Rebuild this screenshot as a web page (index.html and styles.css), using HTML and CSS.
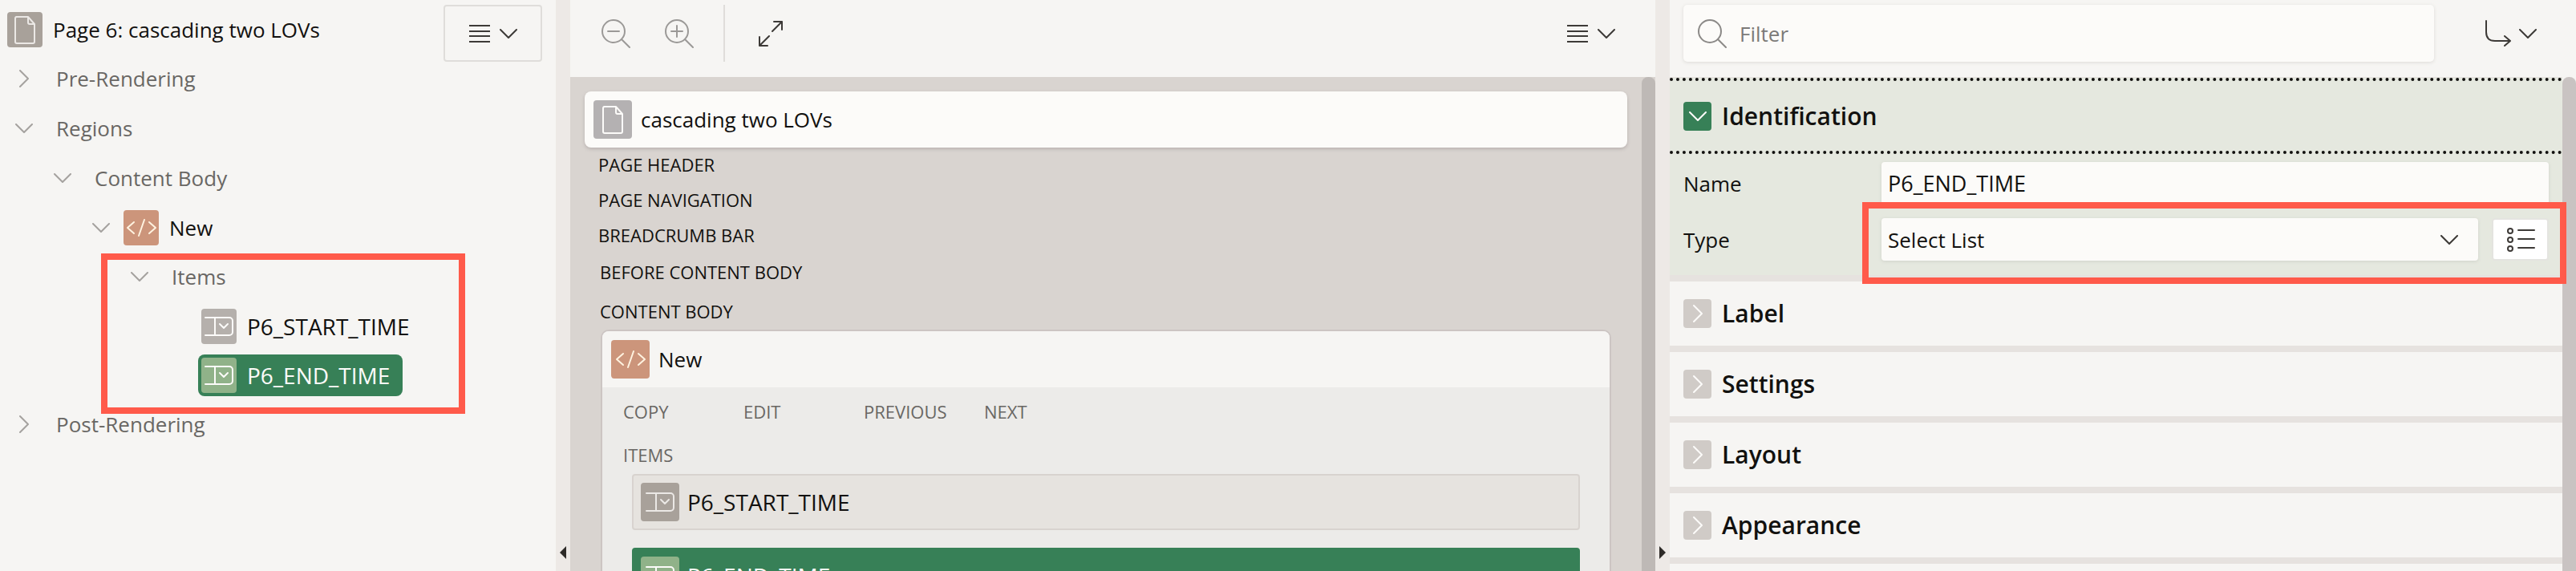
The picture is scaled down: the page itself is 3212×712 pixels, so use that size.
FILE: index.html
```html
<!DOCTYPE html>
<html lang="en">
<head>
<meta charset="utf-8">
<title>Page Designer</title>
<link rel="stylesheet" href="styles.css">
</head>
<body>
<svg class="sprite" aria-hidden="true">
  <symbol id="page" viewBox="0 0 44 44"><path d="M11 6h15l8 9v22a2 2 0 0 1-2 2H12a2 2 0 0 1-2-2V8a2 2 0 0 1 2-2zM26 6v7a2 2 0 0 0 2 2h6"/></symbol>
  <symbol id="code" viewBox="0 0 44 44"><path d="M13 15l-8 7 8 7M26 12l-7 20M32 15l8 7-8 7"/></symbol>
  <symbol id="select-item" viewBox="0 0 44 44"><path d="M5 11h30a4 4 0 0 1 4 4v14a4 4 0 0 1-4 4H5M17 11v22M23 19l5 5 5-5"/></symbol>
  <symbol id="down" viewBox="0 0 22 12"><path d="M1 1l10 10L21 1"/></symbol>
  <symbol id="right" viewBox="0 0 12 22"><path d="M1 1l10 10L1 21"/></symbol>
  <symbol id="lines" viewBox="0 0 26 24"><path d="M0 2h26M0 9h26M0 15h26M0 22h26"/></symbol>
  <symbol id="lens" viewBox="0 0 36 36"><circle cx="15" cy="15" r="14"/><path d="M25 25l10 10"/></symbol>
  <symbol id="zoom-out" viewBox="0 0 36 36"><circle cx="15" cy="15" r="14"/><path d="M25 25l10 10M8 15h14"/></symbol>
  <symbol id="zoom-in" viewBox="0 0 36 36"><circle cx="15" cy="15" r="14"/><path d="M25 25l10 10M8 15h14M15 8v14"/></symbol>
  <symbol id="expand" viewBox="0 0 30 32"><path d="M17 13L29 1M19 1h10v10M13 19L1 31M1 20v11h10"/></symbol>
  <symbol id="goto" viewBox="0 0 32 34"><path d="M1 1v14q0 11 11 11h19M24 20l7 6-7 6"/></symbol>
  <symbol id="list" viewBox="0 0 36 32"><circle cx="5" cy="5" r="3"/><circle cx="5" cy="16" r="3"/><circle cx="5" cy="27" r="3"/><path d="M15 4h20M15 15h20M15 26h20"/></symbol>
</svg>

<main class="designer">
  <nav class="tree-panel" aria-label="Page tree">
    <button class="menu-button menu-button--framed" type="button" aria-label="Tree menu">
      <svg class="i-lines"><use href="#lines"/></svg><svg class="i-down"><use href="#down"/></svg>
    </button>
    <div class="root row row--icon"><svg class="tile tile--taupe"><use href="#page"/></svg><span>Page 6: cascading two LOVs</span></div>
    <ul class="tree">
      <li>
        <div class="row"><button class="toggle" type="button" aria-label="Expand"><svg class="i-right"><use href="#right"/></svg></button><span class="label">Pre-Rendering</span></div>
      </li>
      <li>
        <div class="row"><button class="toggle" type="button" aria-label="Collapse"><svg class="i-down"><use href="#down"/></svg></button><span class="label">Regions</span></div>
        <ul>
          <li>
            <div class="row"><button class="toggle" type="button" aria-label="Collapse"><svg class="i-down"><use href="#down"/></svg></button><span class="label">Content Body</span></div>
            <ul>
              <li>
                <div class="row row--icon"><button class="toggle" type="button" aria-label="Collapse"><svg class="i-down"><use href="#down"/></svg></button><span class="node"><svg class="tile tile--code"><use href="#code"/></svg>New</span></div>
                <ul>
                  <li>
                    <div class="row"><button class="toggle" type="button" aria-label="Collapse"><svg class="i-down"><use href="#down"/></svg></button><span class="label">Items</span></div>
                    <ul>
                      <li class="row row--icon row--leaf"><span class="node item-name"><svg class="tile tile--grey"><use href="#select-item"/></svg>P6_START_TIME</span></li>
                      <li class="row row--icon row--leaf"><span class="node node--selected item-name"><svg class="tile tile--green"><use href="#select-item"/></svg>P6_END_TIME</span></li>
                    </ul>
                    <span class="highlight highlight--items"></span>
                  </li>
                </ul>
              </li>
            </ul>
          </li>
        </ul>
      </li>
      <li>
        <div class="row"><button class="toggle" type="button" aria-label="Expand"><svg class="i-right"><use href="#right"/></svg></button><span class="label">Post-Rendering</span></div>
      </li>
    </ul>
  </nav>

  <div class="splitter"><button class="collapse collapse--left" type="button" aria-label="Collapse tree"></button></div>

  <section class="layout-panel" aria-label="Layout">
    <div class="toolbar">
      <button class="tool tool--dim" type="button" aria-label="Zoom out"><svg class="i-lens"><use href="#zoom-out"/></svg></button>
      <button class="tool tool--dim" type="button" aria-label="Zoom in"><svg class="i-lens"><use href="#zoom-in"/></svg></button>
      <span class="divider"></span>
      <button class="tool tool--expand" type="button" aria-label="Expand"><svg class="i-expand"><use href="#expand"/></svg></button>
      <button class="menu-button menu-button--end" type="button" aria-label="Layout menu">
        <svg class="i-lines"><use href="#lines"/></svg><svg class="i-down"><use href="#down"/></svg>
      </button>
    </div>
    <div class="canvas">
      <div class="canvas-body">
        <div class="card"><svg class="tile tile--big tile--silver"><use href="#page"/></svg><span>cascading two LOVs</span></div>
        <div class="slots">
          <p class="slot">Page Header</p>
          <p class="slot">Page Navigation</p>
          <p class="slot">Breadcrumb Bar</p>
        </div>
        <div class="slots slots--body">
          <p class="slot slot--tall">Before Content Body</p>
          <p class="slot slot--tall">Content Body</p>
        </div>
        <div class="region">
          <div class="region-head"><svg class="tile tile--big tile--code"><use href="#code"/></svg><span>New</span></div>
          <div class="region-positions"><span>Copy</span><span>Edit</span><span>Previous</span><span>Next</span></div>
          <p class="region-items">Items</p>
          <div class="item item-name"><svg class="tile tile--big tile--taupe"><use href="#select-item"/></svg><span>P6_START_TIME</span></div>
          <div class="item item--selected item-name"><svg class="tile tile--big tile--green"><use href="#select-item"/></svg><span>P6_END_TIME</span></div>
        </div>
      </div>
      <div class="scrollbar"></div>
    </div>
  </section>

  <div class="splitter"><button class="collapse collapse--right" type="button" aria-label="Collapse properties"></button></div>

  <section class="props-panel" aria-label="Property editor">
    <div class="toolbar toolbar--props">
      <label class="filter"><svg class="i-lens"><use href="#lens"/></svg><input type="search" placeholder="Filter" aria-label="Filter"></label>
      <button class="menu-button menu-button--goto" type="button" aria-label="Go to group">
        <svg class="i-goto"><use href="#goto"/></svg><svg class="i-down"><use href="#down"/></svg>
      </button>
    </div>
    <div class="props">
      <div class="groups">
        <section class="group group--open">
          <h2><button class="group-head group-head--open" type="button" aria-expanded="true"><span class="box box--open"><svg class="i-down"><use href="#down"/></svg></span>Identification</button></h2>
          <div class="fields">
            <div class="field"><label for="name">Name</label><input id="name" class="control control--name" type="text" value="P6_END_TIME"></div>
            <div class="field">
              <label for="type">Type</label>
              <span class="select-wrap"><select id="type" class="control"><option>Select List</option></select><svg class="i-down select-arrow"><use href="#down"/></svg></span>
              <button class="list-button" type="button" aria-label="Choose type"><svg class="i-list"><use href="#list"/></svg></button>
              <span class="highlight highlight--type"></span>
            </div>
          </div>
        </section>
        <section class="group"><h2><button class="group-head" type="button"><span class="box"><svg class="i-right"><use href="#right"/></svg></span>Label</button></h2></section>
        <section class="group"><h2><button class="group-head" type="button"><span class="box"><svg class="i-right"><use href="#right"/></svg></span>Settings</button></h2></section>
        <section class="group"><h2><button class="group-head" type="button"><span class="box"><svg class="i-right"><use href="#right"/></svg></span>Layout</button></h2></section>
        <section class="group"><h2><button class="group-head" type="button"><span class="box"><svg class="i-right"><use href="#right"/></svg></span>Appearance</button></h2></section>
      </div>
      <div class="scrollbar scrollbar--props"></div>
    </div>
  </section>
</main>
</body>
</html>
```
FILE: styles.css
```css
* { box-sizing: border-box; }

body {
  margin: 0;
  overflow: hidden;
  background: #f6f5f3;
  color: #12110f;
  font: 26px/36px "Open Sans", "Noto Sans", sans-serif;
}

button, input, select {
  margin: 0;
  padding: 0;
  border: 0;
  background: none;
  color: inherit;
  font: inherit;
}

ul { margin: 0; padding: 0; list-style: none; }
p, h2 { margin: 0; }

svg {
  flex: none;
  display: block;
  fill: none;
  stroke: currentColor;
  stroke-width: 2;
  stroke-linecap: round;
  stroke-linejoin: round;
}

.sprite { position: absolute; width: 0; height: 0; }
.i-down { width: 22px; height: 12px; }
.i-right { width: 12px; height: 22px; }
.i-lines { width: 26px; height: 24px; stroke-linecap: butt; }
.i-lens { width: 36px; height: 36px; }
.i-expand { width: 30px; height: 32px; }
.i-goto { width: 32px; height: 34px; }
.i-list { width: 36px; height: 32px; }

.designer {
  display: grid;
  grid-template-columns: 693fr 18px 1353fr 18px 1130fr;
  grid-template-rows: minmax(0, 1fr);
  height: 100vh;
}

.item-name { font-size: 28px; }

.tile {
  width: 44px;
  height: 44px;
  border-radius: 4px;
  color: #fcfbf9;
}
.tile--big { width: 48px; height: 48px; padding: 2px; }
.tile--taupe { background: #a8a19a; color: #ebe8e5; }
.tile--grey { background: #b5b0ac; }
.tile--silver { background: #b4b1b2; }
.tile--code { background: #cc957b; color: #fff3e0; }
.tile--green { background: #90b289; color: #fcfbf9; }

/* Buttons in the toolbars */
.menu-button {
  display: flex;
  align-items: center;
  justify-content: center;
  gap: 12px;
  width: 123px;
  height: 71px;
  color: #3d3a37;
}
.menu-button--framed {
  float: right;
  margin: 6px 17px 0 0;
  border: 2px solid #dfddda;
  border-radius: 4px;
}
.menu-button--end { margin-left: auto; }

/* Page tree */
.tree-panel { padding-top: 6px; }
.tree-panel .menu-button { margin-top: 0; }
.row { display: flex; align-items: center; height: 62px; }
.row--icon { height: 61px; }
.root { gap: 13px; padding-left: 9px; }
.tree { padding-left: 10px; color: #696764; }
.tree ul { padding-left: 48px; }
.row--leaf { padding-left: 41px; }
.toggle {
  display: flex;
  align-items: center;
  justify-content: center;
  width: 40px;
  height: 44px;
  color: #a5a29f;
}
.label { padding-left: 20px; }
.node {
  display: flex;
  align-items: center;
  gap: 13px;
  height: 52px;
  margin-left: 4px;
  padding: 0 16px 0 4px;
  color: #12110f;
}
.node--selected { border-radius: 8px; background: #378057; color: #fcfbf9; }
.tree li { position: relative; }

.highlight {
  position: absolute;
  z-index: 2;
  border: 8px solid #ff5a4a;
  pointer-events: none;
}
.highlight--items { top: 2px; left: -28px; width: 454px; bottom: -18px; }
.highlight--type { top: -20px; right: -22px; bottom: -29px; left: 223px; }

/* Splitters */
.splitter {
  display: flex;
  align-items: flex-end;
  justify-content: center;
  padding-bottom: 15px;
  background: #ede9e6;
}
.collapse { width: 8px; height: 16px; background: #2d2a27; }
.collapse--left { clip-path: polygon(100% 0, 0 50%, 100% 100%); }
.collapse--right { clip-path: polygon(0 0, 100% 50%, 0 100%); }

/* Layout editor */
.layout-panel, .props-panel {
  display: grid;
  grid-template-rows: 96px minmax(0, 1fr);
  min-width: 0;
  min-height: 0;
}
.toolbar { display: flex; align-items: flex-start; padding: 6px 19px 0 17px; }
.tool {
  display: flex;
  align-items: center;
  justify-content: center;
  width: 79px;
  height: 71px;
  color: #3d3a37;
}
.tool--dim { color: #9b9997; }
.tool--expand { width: 113px; }
.divider { width: 2px; height: 71px; margin-left: 16px; background: #dfddda; }

.canvas {
  display: flex;
  min-height: 0;
  overflow: hidden;
  background: #d9d4d0;
}
.canvas-body { flex: 1; padding: 18px 18px 0; }
.scrollbar {
  flex: none;
  width: 17px;
  border-radius: 8px 8px 0 0;
  background: #beb9b6;
}
.card {
  display: flex;
  align-items: center;
  gap: 11px;
  height: 70px;
  padding: 0 11px;
  border-radius: 8px;
  background: #fcfbf9;
  box-shadow: 0 2px 4px #b9b2b0;
}
.slots { padding-left: 17px; }
.slots--body { padding-left: 19px; }
.slot, .region-positions, .region-items {
  font-size: 22px;
  line-height: 44px;
  text-transform: uppercase;
}
.slot--tall { line-height: 49px; }
.slots:not(.slots--body) { margin-top: -1px; }
.region {
  margin: -2px 20px 0 20px;
  border: 2px solid #ccc5c3;
  border-radius: 10px;
  background: #ecebe9;
  overflow: hidden;
}
.region-head {
  display: flex;
  align-items: center;
  gap: 11px;
  height: 70px;
  padding: 0 11px;
  background: #f6f5f3;
}
.region-positions {
  display: grid;
  grid-template-columns: repeat(4, 150px);
  padding: 8px 26px 0;
  color: #696764;
}
.region-items { padding: 10px 26px 0; color: #696764; }
.item {
  display: flex;
  align-items: center;
  gap: 10px;
  height: 70px;
  margin: 2px 37px 22px;
  padding: 0 9px;
  border: 2px solid #d8d3cf;
  border-radius: 4px;
  background: #e6e3df;
}
.item--selected { border-color: #378057; background: #378057; color: #fcfbf9; }

/* Property editor */
.toolbar--props { gap: 34px; padding: 6px 20px 0 17px; }
.filter {
  display: flex;
  flex: 1;
  align-items: center;
  gap: 16px;
  height: 71px;
  padding-left: 18px;
  border-radius: 5px;
  background: #fcfbf9;
  box-shadow: 0 1px 4px #dcdad7;
  color: #8b8987;
}
.filter input { flex: 1; min-width: 0; outline: 0; color: #12110f; }
.filter input::placeholder { color: #7c7a78; opacity: 1; }
.menu-button--goto { gap: 10px; }

.props { display: flex; min-height: 0; overflow: hidden; }
.groups { flex: 1; min-width: 0; }
.scrollbar--props { background: #c9c3c2; }
.group { border-bottom: 8px solid #e6e2df; }
.group--open { border-top: 1px solid #e6e2df; background: #e5e8df; }
.group h2 { font: inherit; }
.group-head {
  display: flex;
  align-items: center;
  gap: 13px;
  width: 100%;
  height: 80px;
  padding: 0 17px;
  font-size: 30px;
  font-weight: 600;
}
.group-head--open {
  height: 95px;
  border-top: 4px dotted #12110f;
  border-bottom: 4px dotted #12110f;
}
.box {
  display: flex;
  align-items: center;
  justify-content: center;
  width: 35px;
  height: 36px;
  border-radius: 4px;
  background: #d0cbc7;
  color: #fcfbf9;
}
.box--open { background: #378057; }
.fields {
  display: grid;
  gap: 17px;
  padding: 10px 17px 18px;
}
.field { position: relative; display: flex; align-items: center; height: 53px; }
.field label { flex: none; width: 247px; }
.control {
  flex: 1;
  width: 100%;
  height: 53px;
  padding: 0 8px;
  border-radius: 4px;
  background: #fcfbf9;
  box-shadow: 0 1px 4px #cfd2ca;
  appearance: none;
}
.control--name { font-size: 27px; }
.select-wrap { position: relative; flex: 1; display: flex; }
.select-arrow {
  position: absolute;
  top: 21px;
  right: 25px;
  color: #3d3a37;
  pointer-events: none;
}
.list-button {
  display: flex;
  align-items: center;
  justify-content: center;
  width: 71px;
  height: 53px;
  margin-left: 17px;
  border: 2px solid #e4e4e0;
  border-radius: 4px;
  background: #fff;
  color: #3d3a37;
}
```
